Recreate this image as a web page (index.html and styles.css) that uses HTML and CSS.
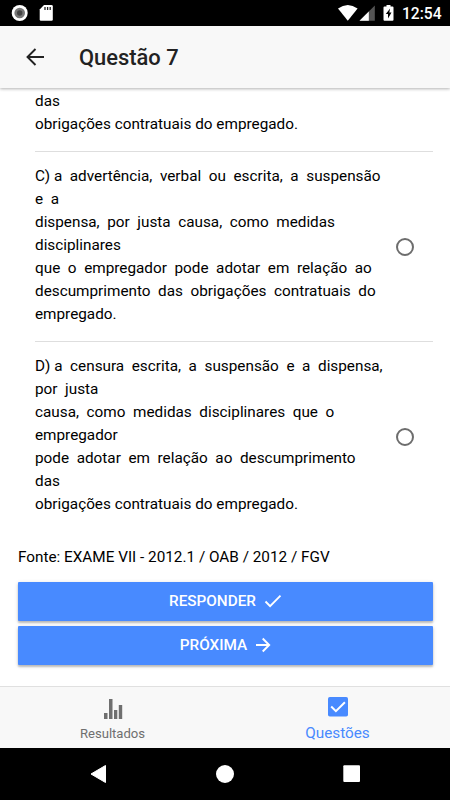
FILE: index.html
```
<!DOCTYPE html>
<html lang="pt-BR">
<head>
<meta charset="utf-8">
<title>Questão 7</title>
<link rel="stylesheet" href="styles.css">
</head>
<body>

<div class="statusbar">
  <svg class="status-left" width="56" height="26" viewBox="0 0 56 26">
    <circle cx="19.7" cy="13" r="8" fill="#fff"/>
    <circle cx="19.7" cy="13" r="5.3" fill="#777"/>
    <circle cx="19.7" cy="13" r="2.7" fill="#444"/>
    <path d="M44 5h7.500q1.300 0 1.300 1.300v13.200q0 1.300-1.300 1.300H41q-1.300 0-1.300-1.300V9.500z" fill="#fff"/>
    <path d="M45 7v3M47.600 7v3M50.200 7v3" stroke="#222" stroke-width="1.300"/>
  </svg>
  <svg class="status-right" width="60" height="26" viewBox="0 0 60 26">
    <path d="M0 8.600Q9.800 1.600 19.600 8.600L9.800 20.800z" fill="#fff"/>
    <path d="M36.800 5.500V20.800H21.500z" fill="#555"/>
    <path d="M30.800 11.500V20.800H21.500z" fill="#fff"/>
    <path d="M46.500 6.500h2V5h4v1.500h2q1 0 1 1v12.300q0 1-1 1h-8q-1 0-1-1V7.500q0-1 1-1z" fill="#fff"/>
    <path d="M52.100 8.500L47.800 14h2.200v4.600L53.500 12.600h-2.200z" fill="#000"/>
  </svg>
  <span class="clock">12:54</span>
</div>

<header class="toolbar">
  <svg class="back" width="20" height="20" viewBox="0 0 20 20">
    <path d="M19 10H3M10.500 2L2.500 10l8 8" fill="none" stroke="#222" stroke-width="1.900"/>
  </svg>
  <h1>Questão 7</h1>
</header>

<main class="content">
  <div class="option option-cut">
    <p class="answer">das
obrigações contratuais do empregado.</p>
  </div>
  <div class="option">
    <p class="answer">C) a  advertência,  verbal  ou  escrita,  a  suspensão
e  a
dispensa,  por  justa  causa,  como  medidas
disciplinares
que  o  empregador  pode  adotar  em  relação  ao
descumprimento  das  obrigações  contratuais  do
empregado.</p>
    <span class="radio"></span>
  </div>
  <div class="option option-last">
    <p class="answer">D) a  censura  escrita,  a  suspensão  e  a  dispensa,
por  justa
causa,  como  medidas  disciplinares  que  o
empregador
pode  adotar  em  relação  ao  descumprimento
das
obrigações contratuais do empregado.</p>
    <span class="radio"></span>
  </div>

  <p class="source">Fonte: EXAME VII - 2012.1 / OAB / 2012 / FGV</p>

  <button class="btn">RESPONDER
    <svg width="18" height="14" viewBox="0 0 18 14"><path d="M1.500 7.500l4.600 4.600L16.500 1.700" fill="none" stroke="#fff" stroke-width="1.900"/></svg>
  </button>
  <button class="btn btn-next">PRÓXIMA
    <svg width="16" height="16" viewBox="0 0 16 16"><path d="M1 8h13M7.700 1.500L14.200 8l-6.500 6.500" fill="none" stroke="#fff" stroke-width="1.900"/></svg>
  </button>
</main>

<nav class="tabs">
  <a class="tab">
    <svg width="20" height="20" viewBox="0 0 20 20"><path d="M1 14h3.500v6H1zM6 0h3.500v20H6zM11 11h3.300v9H11zM15.800 6h3.400v14h-3.400z" fill="#6f6f6f"/></svg>
    <span>Resultados</span>
  </a>
  <a class="tab active">
    <svg width="20" height="20" viewBox="0 0 20 20"><rect width="20" height="19.500" rx="1.800" fill="#488aff"/><path d="M3.200 9.500l4.700 4.700 9-9" fill="none" stroke="#fff" stroke-width="2"/></svg>
    <span>Questões</span>
  </a>
</nav>

<div class="navbar">
  <svg width="450" height="52" viewBox="0 0 450 52">
    <path d="M91 26L105.500 17.500V34.500z" fill="#fff" stroke="#fff" stroke-linejoin="round"/>
    <circle cx="225" cy="26" r="9" fill="#fff"/>
    <rect x="343.300" y="17.300" width="16.700" height="16.700" rx="1" fill="#fff"/>
  </svg>
</div>

</body>
</html>
```
FILE: styles.css
```
* { box-sizing: border-box; }

body {
  margin: 0;
  width: 450px;
  height: 800px;
  overflow: hidden;
  display: flex;
  flex-direction: column;
  background: #fff;
  color: #000;
  font-family: Roboto, sans-serif;
}

h1, p { margin: 0; }
svg { display: block; flex: none; }

.statusbar {
  height: 26px;
  flex: none;
  display: flex;
  align-items: center;
  background: #000;
  color: #fff;
}
.status-right { margin-left: 282px; }
.clock {
  margin-left: 4px;
  padding-top: 2px;
  font-size: 15.6px;
  font-weight: 500;
}

.toolbar {
  height: 62px;
  flex: none;
  display: flex;
  align-items: center;
  padding-left: 25px;
  background: #f8f8f8;
  box-shadow: 0 1px 3px rgba(0, 0, 0, 0.3);
  z-index: 1;
}
.toolbar h1 {
  margin-left: 34px;
  font-size: 21.9px;
  font-weight: 500;
  color: #222;
}

.content {
  flex: 1;
  min-height: 0;
  padding: 0 17px 0 18px;
}

.option {
  display: flex;
  align-items: center;
  justify-content: space-between;
  height: 190px;
  margin-left: 17px;
  padding-right: 19px;
  border-bottom: 1px solid #dedede;
}
.option-cut { height: 64px; padding-bottom: 14px; }
.option-last { border-bottom: none; }

.answer {
  padding-bottom: 2px;
  white-space: pre;
  font-size: 15.3px;
  line-height: 23px;
}
.option-cut .answer { padding-bottom: 0; }
.option-last .answer { padding-bottom: 3px; }
.radio {
  width: 18px;
  height: 18px;
  flex: none;
  border: 2px solid #6d6d6d;
  border-radius: 50%;
}

.source {
  margin-top: 14px;
  font-size: 15.3px;
  line-height: 23px;
}

.btn {
  display: flex;
  align-items: center;
  justify-content: center;
  gap: 8px;
  width: 100%;
  height: 39px;
  margin: 13px 0 0;
  padding: 0 6px 2px;
  border: none;
  border-radius: 1px;
  background: #488aff;
  color: #fff;
  font: 500 15.3px Roboto, sans-serif;
  box-shadow: 0 2px 2px rgba(0, 0, 0, 0.2), 0 1px 4px rgba(0, 0, 0, 0.15);
}
.btn-next { margin-top: 5px; }

.tabs {
  height: 62px;
  flex: none;
  display: flex;
  border-top: 1px solid #e0e0e0;
  background: #f8f8f8;
}
.tab {
  flex: 1;
  display: flex;
  flex-direction: column;
  align-items: center;
  padding-top: 12px;
  font-size: 13.1px;
  color: #6f6f6f;
}
.tab span { margin-top: 7px; }
.tab.active { padding-top: 10px; font-size: 15.3px; color: #488aff; }

.navbar {
  height: 52px;
  flex: none;
  background: #000;
}
```
